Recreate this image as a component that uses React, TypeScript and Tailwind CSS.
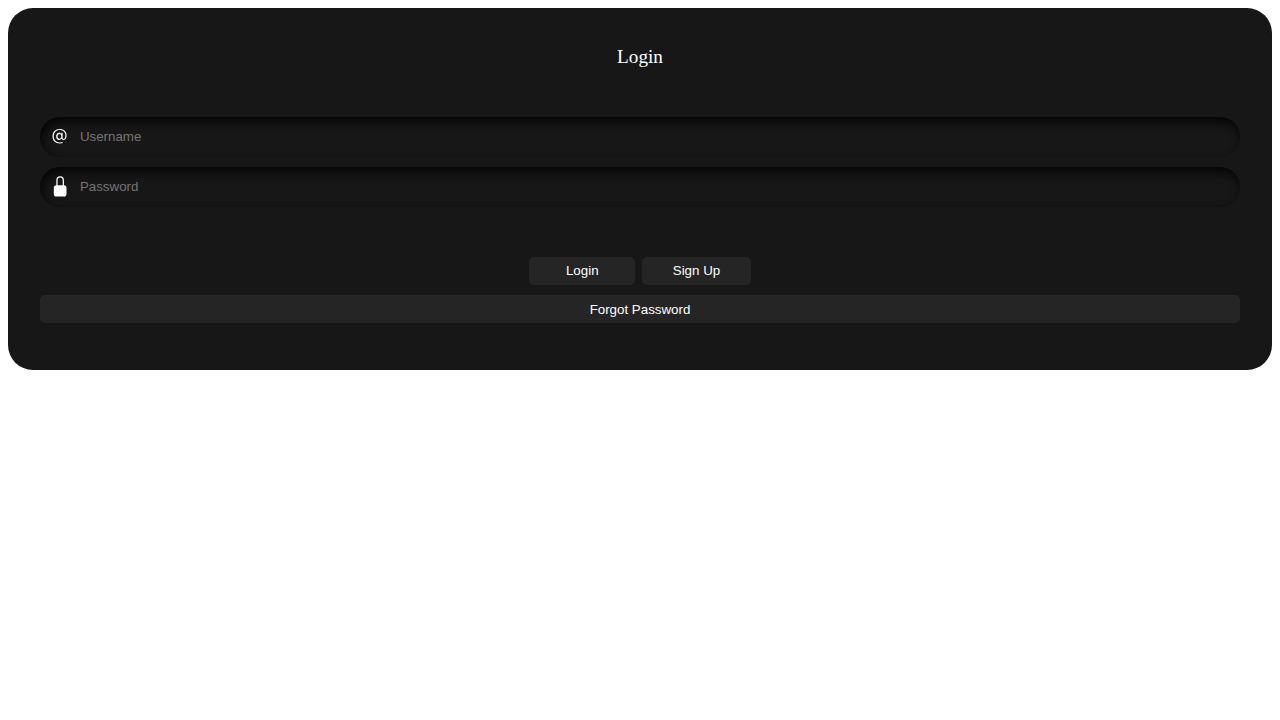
export default function App() {
  const field =
    "flex items-center gap-[8px] rounded-[25px] bg-[#171717] p-[9.6px] h-[40px] shadow-[inset_2px_5px_10px_rgb(5,5,5)]";
  const input =
    "h-[17px] w-full border-none bg-transparent px-[2px] py-px text-[13.333px] leading-[15px] text-[#d3d3d3] outline-none placeholder:text-[#757575] font-['Liberation_Sans',sans-serif]";
  const icon = "h-[20.8px] w-[20.8px] fill-white";
  const button =
    "h-[28.33px] rounded-[5px] bg-[#252525] text-[13.333px] leading-[15px] text-white font-['Liberation_Sans',sans-serif]";
  return (
    <div className="min-h-screen bg-white p-[8px]">
      <form className="flex h-[362px] flex-col gap-[10px] rounded-[25px] bg-[#171717] px-[32px]">
        <p className="my-[38.4px] text-center font-['Liberation_Serif',serif] text-[19.2px] leading-[22px] text-white">
          Login
        </p>
        <div className={field}>
          <svg viewBox="0 0 16 16" className={icon}>
            <path d="M13.106 7.222c0-2.967-2.249-5.032-5.482-5.032-3.35 0-5.646 2.318-5.646 5.702 0 3.493 2.235 5.708 5.762 5.708.862 0 1.689-.123 2.304-.335v-.862c-.43.199-1.354.328-2.29.328-2.926 0-4.813-1.88-4.813-4.798 0-2.844 1.921-4.881 4.594-4.881 2.735 0 4.608 1.688 4.608 4.156 0 1.682-.554 2.769-1.416 2.769-.492 0-.772-.28-.772-.76V5.206H8.923v.834h-.11c-.266-.595-.881-.964-1.6-.964-1.4 0-2.378 1.162-2.378 2.823 0 1.737.957 2.906 2.379 2.906.8 0 1.415-.39 1.709-1.087h.11c.081.67.703 1.148 1.503 1.148 1.572 0 2.57-1.415 2.57-3.643zm-7.177.704c0-1.197.54-1.907 1.456-1.907.93 0 1.524.738 1.524 1.907S8.308 9.84 7.371 9.84c-.895 0-1.442-.725-1.442-1.914z" />
          </svg>
          <input type="text" placeholder="Username" className={input} />
        </div>
        <div className={field}>
          <svg viewBox="0 0 16 16" className={icon}>
            <path d="M8 1a2 2 0 0 1 2 2v4H6V3a2 2 0 0 1 2-2zm3 6V3a3 3 0 0 0-6 0v4a2 2 0 0 0-2 2v5a2 2 0 0 0 2 2h6a2 2 0 0 0 2-2V9a2 2 0 0 0-2-2z" />
          </svg>
          <input type="password" placeholder="Password" className={input} />
        </div>
        <div className="mt-[40px] flex justify-center gap-[6.9px]">
          <button type="button" className={`${button} w-[106.1px]`}>Login</button>
          <button type="button" className={`${button} w-[108.6px]`}>Sign Up</button>
        </div>
        <button type="button" className={button}>Forgot Password</button>
      </form>
    </div>
  );
}
